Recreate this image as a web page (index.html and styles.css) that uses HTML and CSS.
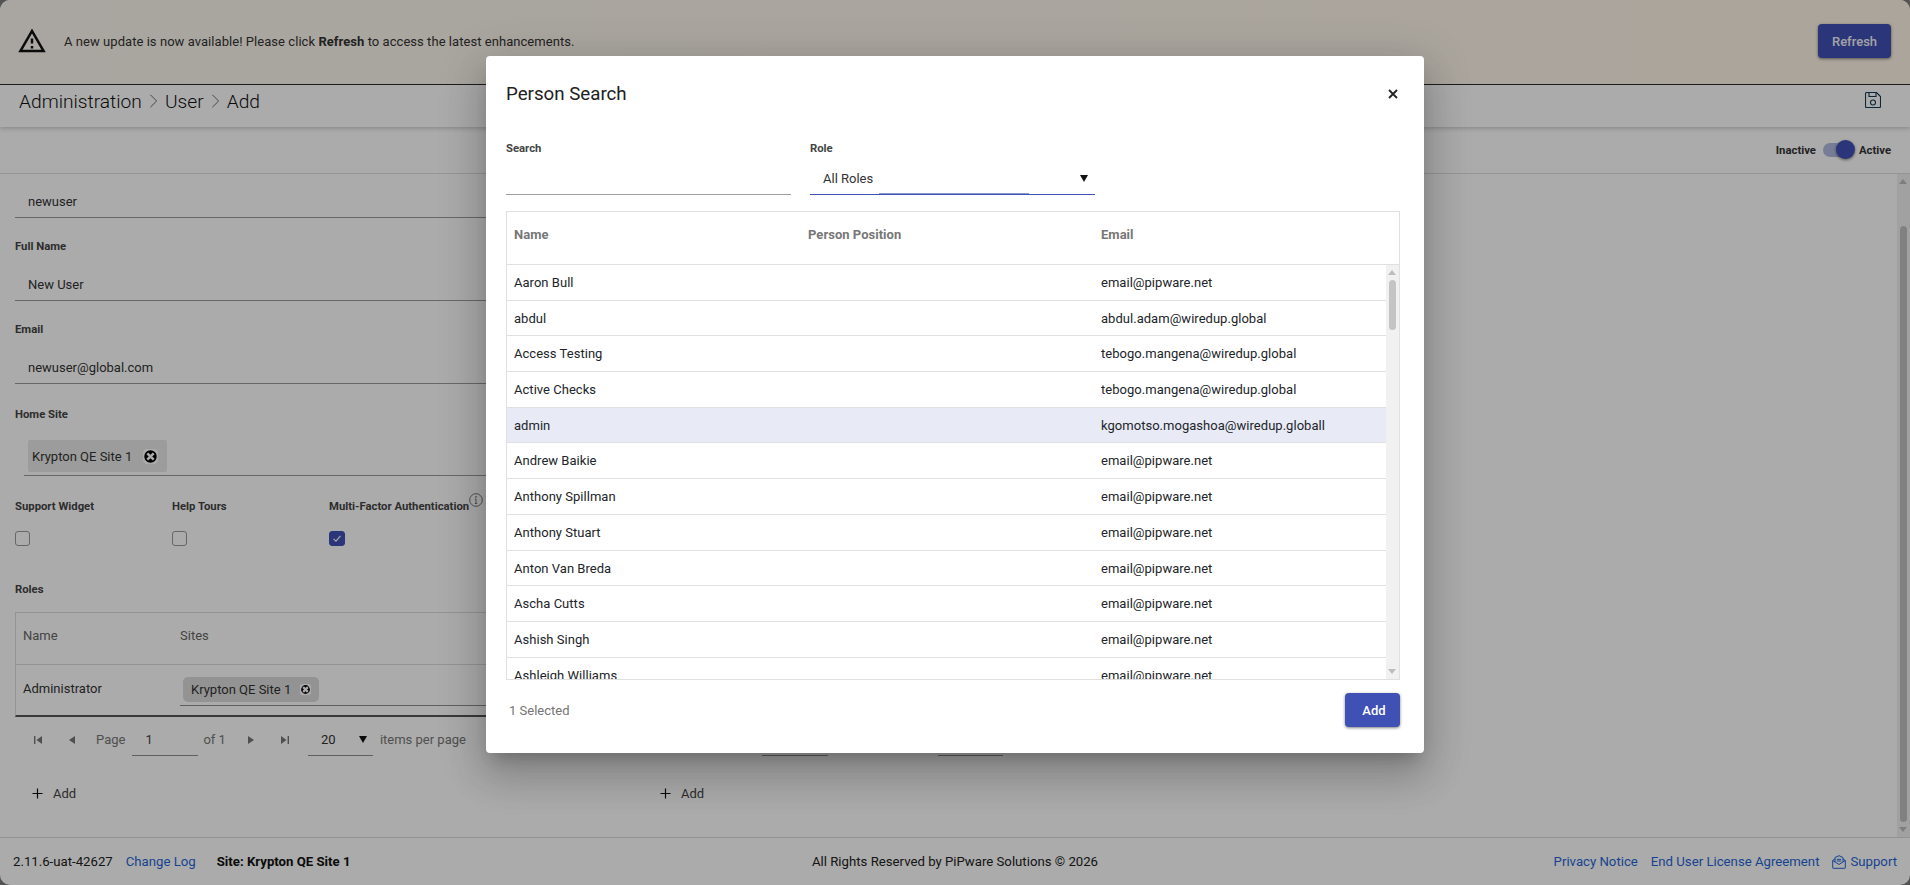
FILE: index.html
```html
<!DOCTYPE html>
<html lang="en">
<head>
<meta charset="utf-8">
<title>Administration - User - Add</title>
<link rel="stylesheet" href="styles.css">
</head>
<body>
<div class="app">
  <header class="banner">
    <svg class="warn-icon" viewBox="0 0 24 24"><path d="M12 5.99L19.53 19H4.47L12 5.99M12 2L1 21h22L12 2zm1 14h-2v2h2v-2zm0-6h-2v4h2v-4z"/></svg>
    <p class="banner-text">A new update is now available! Please click <b>Refresh</b> to access the latest enhancements.</p>
    <button class="btn btn-refresh">Refresh</button>
  </header>

  <div class="crumbs">
    <span>Administration</span>
    <svg class="chev" viewBox="0 0 10 18"><path d="M1.5 2l7 7-7 7"/></svg>
    <span>User</span>
    <svg class="chev" viewBox="0 0 10 18"><path d="M1.5 2l7 7-7 7"/></svg>
    <span>Add</span>
    <svg class="save-icon" viewBox="0 0 16 16"><path d="M1.5.5h10l4 4v10a1 1 0 0 1-1 1h-13a1 1 0 0 1-1-1v-13a1 1 0 0 1 1-1z"/><path d="M4 .5v4h7v-4"/><circle cx="8" cy="10.5" r="2.5"/></svg>
  </div>

  <div class="toolbar">
    <span class="tog-label">Inactive</span>
    <span class="toggle"><span class="knob"></span></span>
    <span class="tog-label">Active</span>
  </div>

  <main class="main">
    <div class="content">
      <div class="col-top">
        <div class="input first">newuser</div>
        <label class="label">Full Name</label>
        <div class="input">New User</div>
        <label class="label">Email</label>
        <div class="input">newuser@global.com</div>
        <label class="label label-home">Home Site</label>
        <div class="chip-box">
          <span class="chip">Krypton QE Site 1
            <svg class="x-icon" viewBox="0 0 14 14"><circle cx="7" cy="7" r="7"/><path d="M4 4l6 6M10 4l-6 6"/></svg>
          </span>
        </div>
        <div class="checks">
          <div class="check-col">
            <label class="label-flat">Support Widget</label>
            <span class="cb"></span>
          </div>
          <div class="check-col">
            <label class="label-flat">Help Tours</label>
            <span class="cb"></span>
          </div>
          <div class="check-col">
            <label class="label-flat">Multi-Factor Authentication
              <svg class="info-icon" viewBox="0 0 14 14"><circle cx="7" cy="7" r="6.3"/><path d="M7 6v4.5M5.8 10.5h2.400M5.900 6h1.100"/><circle class="dot" cx="7" cy="3.800" r=".9"/></svg>
            </label>
            <span class="cb cb-on"><svg viewBox="0 0 15 15"><path d="M3.500 8l2.800 2.600 5.200-6"/></svg></span>
          </div>
        </div>
      </div>

      <div class="cols">
        <section class="col">
          <label class="label-flat roles-label">Roles</label>
          <div class="roles">
            <div class="roles-head"><span class="rc1">Name</span><span>Sites</span></div>
            <div class="roles-row">
              <span class="rc1 role-name">Administrator</span>
              <div class="role-sites">
                <span class="chip chip-sm">Krypton QE Site 1
                  <svg class="x-icon x-sm" viewBox="0 0 14 14"><circle cx="7" cy="7" r="7"/><path d="M4 4l6 6M10 4l-6 6"/></svg>
                </span>
              </div>
            </div>
          </div>
          <div class="pager">
            <svg class="pg pg-first" viewBox="0 0 10 10"><path d="M1 1h1.400v8H1zM9 1v8L3.500 5z"/></svg>
            <svg class="pg pg-prev" viewBox="0 0 10 10"><path d="M8 1v8L2 5z"/></svg>
            <span class="pg-page">Page</span>
            <span class="pg-input">1</span>
            <span class="pg-of">of 1</span>
            <svg class="pg pg-next" viewBox="0 0 10 10"><path d="M2 1v8l6-4z"/></svg>
            <svg class="pg pg-last" viewBox="0 0 10 10"><path d="M1 1v8l5.500-4zM7.600 1H9v8H7.600z"/></svg>
            <span class="pg-select">20<i class="tri"></i></span>
            <span class="pg-items">items per page</span>
          </div>
          <button class="add-link"><svg viewBox="0 0 12 12"><path d="M6 .5v11M.5 6h11"/></svg>Add</button>
        </section>
        <section class="col col-end">
          <div class="pager">
            <svg class="pg pg-first" viewBox="0 0 10 10"><path d="M1 1h1.400v8H1zM9 1v8L3.500 5z"/></svg>
            <svg class="pg pg-prev" viewBox="0 0 10 10"><path d="M8 1v8L2 5z"/></svg>
            <span class="pg-page">Page</span>
            <span class="pg-input">1</span>
            <span class="pg-of">of 1</span>
            <svg class="pg pg-next" viewBox="0 0 10 10"><path d="M2 1v8l6-4z"/></svg>
            <svg class="pg pg-last" viewBox="0 0 10 10"><path d="M1 1v8l5.500-4zM7.600 1H9v8H7.600z"/></svg>
            <span class="pg-select">20<i class="tri"></i></span>
            <span class="pg-items">items per page</span>
          </div>
          <button class="add-link"><svg viewBox="0 0 12 12"><path d="M6 .5v11M.5 6h11"/></svg>Add</button>
        </section>
      </div>
    </div>
    <div class="vscroll"><i class="arr-up"></i><i class="thumb"></i><i class="arr-down"></i></div>
  </main>

  <footer class="footer">
    <div class="foot-left">
      <span>2.11.6-uat-42627</span>
      <a class="link">Change Log</a>
      <b class="foot-site">Site: Krypton QE Site 1</b>
    </div>
    <div class="foot-center">All Rights Reserved by PiPware Solutions © 2026</div>
    <div class="foot-right">
      <a class="link">Privacy Notice</a>
      <a class="link">End User License Agreement</a>
      <a class="link support"><svg class="sup-icon" viewBox="0 0 14 14"><path d="M.7 5.500L7 9.500l6.300-4v7.300a.5.5 0 0 1-.5.5H1.200a.5.5 0 0 1-.5-.5zM.7 5.500L3 3.800M13.300 5.500L11 3.800M3 7V2.500L7 .7l4 1.800V7M4.800 4.300h4.400M4.800 6h4.400"/></svg>Support</a>
    </div>
  </footer>
</div>

<div class="overlay"></div>

<div class="modal" role="dialog">
  <div class="modal-head">
    <h2 class="modal-title">Person Search</h2>
    <svg class="close" viewBox="0 0 10 10"><path d="M1 1l8 8M9 1l-8 8"/></svg>
  </div>
  <div class="filters">
    <div class="filter">
      <label class="label-m">Search</label>
      <div class="m-input"></div>
    </div>
    <div class="filter">
      <label class="label-m">Role</label>
      <div class="m-input m-select"><span>All Roles</span><i class="tri tri-m"></i><i class="seg"></i></div>
    </div>
  </div>
  <div class="ptable">
    <div class="p-head"><span>Name</span><span>Person Position</span><span>Email</span></div>
    <div class="p-wrap">
      <div class="p-body">
        <div class="p-row"><span>Aaron Bull</span><span></span><span>email@pipware.net</span></div>
        <div class="p-row"><span>abdul</span><span></span><span>abdul.adam@wiredup.global</span></div>
        <div class="p-row"><span>Access Testing</span><span></span><span>tebogo.mangena@wiredup.global</span></div>
        <div class="p-row"><span>Active Checks</span><span></span><span>tebogo.mangena@wiredup.global</span></div>
        <div class="p-row p-sel"><span>admin</span><span></span><span>kgomotso.mogashoa@wiredup.globall</span></div>
        <div class="p-row"><span>Andrew Baikie</span><span></span><span>email@pipware.net</span></div>
        <div class="p-row"><span>Anthony Spillman</span><span></span><span>email@pipware.net</span></div>
        <div class="p-row"><span>Anthony Stuart</span><span></span><span>email@pipware.net</span></div>
        <div class="p-row"><span>Anton Van Breda</span><span></span><span>email@pipware.net</span></div>
        <div class="p-row"><span>Ascha Cutts</span><span></span><span>email@pipware.net</span></div>
        <div class="p-row"><span>Ashish Singh</span><span></span><span>email@pipware.net</span></div>
        <div class="p-row"><span>Ashleigh Williams</span><span></span><span>email@pipware.net</span></div>
      </div>
      <div class="p-scroll"><i class="arr-up"></i><i class="thumb"></i><i class="arr-down"></i></div>
    </div>
  </div>
  <div class="modal-foot">
    <span class="selected">1 Selected</span>
    <button class="btn btn-add">Add</button>
  </div>
</div>
</body>
</html>
```

FILE: styles.css
```css
* { box-sizing: border-box; }
html, body { margin: 0; height: 100%; overflow: hidden; }
body {
  background: #7c7c7c;
  font-family: Roboto, "Liberation Sans", sans-serif;
  font-size: 13px;
  color: #212529;
}
.app {
  width: 1910px;
  height: 885px;
  display: flex;
  flex-direction: column;
  background: #fff;
  border-radius: 10px;
  overflow: hidden;
}
.banner {
  height: 85px;
  flex: none;
  display: flex;
  align-items: center;
  padding: 0 19px;
  background: linear-gradient(90deg, #fdf8f0, #fff6e8);
  border-bottom: 1px solid #2b2b2b;
}
.warn-icon { width: 30px; height: 30px; fill: #111; margin: 0 0 2px -2px; }
.banner-text { margin: 0 0 2px 17px; font-size: 13px; letter-spacing: .05px; flex: 1; color: #333; }
.btn {
  border: 0;
  border-radius: 4px;
  background: #3f51b5;
  color: #fff;
  font: 500 13px Roboto, sans-serif;
  box-shadow: 0 1px 3px rgba(0, 0, 0, .5);
}
.btn-refresh { width: 73px; height: 34px; margin: 0 0 2px; color: rgba(255, 255, 255, .95); }
.crumbs {
  height: 42px;
  flex: none;
  display: flex;
  align-items: center;
  padding: 0 29px 10px 19px;
  gap: 7px;
  font-size: 19.2px;
  font-weight: 300;
  color: #111;
  box-shadow: 0 2px 4px rgba(0, 0, 0, .18);
  position: relative;
}
.chev { width: 9px; height: 16px; fill: none; stroke: #666; stroke-width: 1.100; }
.save-icon { width: 16px; height: 16px; margin-left: auto; margin-top: -2px; fill: none; stroke: #0f3a55; stroke-width: 1.100; }
.toolbar {
  height: 47px;
  flex: none;
  display: flex;
  align-items: center;
  justify-content: flex-end;
  padding: 0 19px 0 0;
  border-bottom: 1px solid #dedede;
}
.tog-label { font-size: 11.3px; font-weight: 700; color: #333; }
.toggle {
  width: 25px;
  height: 14px;
  margin: 0 11px 0 7px;
  border-radius: 7px;
  background: #b2b9e1;
  position: relative;
}
.knob {
  position: absolute;
  right: -7px;
  top: -3px;
  width: 19px;
  height: 19px;
  border-radius: 50%;
  background: #3f51b5;
  box-shadow: 0 1px 3px rgba(0, 0, 0, .5);
}
.main { flex: 1; min-height: 0; display: flex; }
.content { flex: 1; padding-left: 15px; }
.col-top { width: 615px; }
.input {
  height: 33px;
  margin-top: 14px;
  padding-left: 13px;
  line-height: 34px;
  font-size: 13px;
  color: #333;
  border-bottom: 1px solid #9c9c9c;
}
.input.first { margin-top: 11px; }
.label, .label-flat {
  display: block;
  margin-top: 22px;
  height: 14px;
  line-height: 14px;
  font-size: 11.3px;
  font-weight: 700;
  color: #444;
}
.label-home { margin-top: 24px; }
.chip-box {
  margin-left: 9px;
  height: 54px;
  padding: 18px 0 0 4px;
  border-bottom: 1px solid #9c9c9c;
}
.chip {
  display: inline-flex;
  align-items: center;
  width: 139px;
  height: 32px;
  padding-left: 4px;
  background: #e9e9e9;
  border-radius: 2px;
  font-size: 13px;
  color: #333;
}
.x-icon { width: 15px; height: 15px; margin-left: 11px; fill: #000; stroke: #fff; stroke-width: 2.400; }
.checks { display: flex; margin-top: 24px; }
.check-col { width: 157px; }
.check-col .label-flat { margin-top: 0; white-space: nowrap; position: relative; }
.info-icon {
  position: absolute;
  left: 140px;
  top: -7px;
  width: 14px;
  height: 14px;
  fill: none;
  stroke: #777;
  stroke-width: 1;
}
.info-icon .dot { fill: #777; stroke: none; }
.cb {
  display: block;
  width: 15px;
  height: 15px;
  margin-top: 17px;
  border: 1px solid #9a9a9a;
  border-radius: 3px;
}
.cb-on { width: 16px; background: #3f51b5; border-color: #3f51b5; }
.cb-on svg { display: block; width: 14px; height: 13px; fill: none; stroke: #fff; stroke-width: 1.300; }
.cols { display: grid; grid-template-columns: 615px 615px; column-gap: 15px; }
.col-end { display: flex; flex-direction: column; justify-content: flex-end; }
.roles-label { margin-top: 37px; }
.roles {
  margin-top: 15px;
  height: 105px;
  border: 1px solid #dcdcdc;
  border-bottom: 2px solid #555;
}
.roles-head {
  height: 52px;
  display: flex;
  align-items: center;
  padding-bottom: 7px;
  border-bottom: 1px solid #dcdcdc;
  font-size: 13px;
  color: #666;
}
.rc1 { width: 164px; padding-left: 7px; flex: none; }
.roles-row { display: flex; height: 49px; }
.role-name { line-height: 48px; font-size: 13px; color: #333; }
.role-sites { flex: 1; height: 41px; padding: 12px 0 0 3px; border-bottom: 1px solid #8f8f8f; }
.chip-sm {
  width: 136px;
  height: 25px;
  padding-left: 8px;
  background: #dcdcdc;
  border-radius: 5px;
  font-size: 13px;
}
.x-sm { width: 11px; height: 11px; margin-left: 9px; stroke-width: 2.800; }
.pager {
  display: flex;
  align-items: center;
  height: 33px;
  margin-top: 6px;
  font-size: 13px;
  color: #777;
  position: relative;
}
.pg { width: 10px; height: 10px; fill: #777; flex: none; }
.pg-first { margin-left: 18px; }
.pg-prev { margin-left: 24px; }
.pg-page { margin-left: 19px; }
.pg-input {
  width: 66px;
  height: 33px;
  margin-left: 7px;
  padding-left: 13px;
  line-height: 33px;
  color: #444;
  border-bottom: 1px solid #8f8f8f;
}
.pg-of { margin-left: 5px; }
.pg-next { margin-left: 20px; }
.pg-last { margin-left: 24px; }
.pg-select {
  width: 65px;
  height: 33px;
  margin-left: 18px;
  padding-left: 13px;
  line-height: 33px;
  color: #333;
  border-bottom: 1px solid #8f8f8f;
  position: relative;
}
.tri {
  position: absolute;
  right: 6px;
  top: 13px;
  border-left: 4px solid transparent;
  border-right: 4px solid transparent;
  border-top: 7px solid #111;
}
.pg-items { margin-left: 7px; }
.add-link {
  display: flex;
  align-items: center;
  height: 30px;
  margin-top: 22px;
  padding: 0 0 0 17px;
  border: 0;
  background: none;
  font: 13px Roboto, sans-serif;
  color: #444;
}
.add-link svg { width: 11px; height: 11px; margin-right: 10px; fill: none; stroke: #111; stroke-width: 1.300; }
.col-end .add-link { padding-left: 15px; }
.vscroll {
  width: 13px;
  flex: none;
  background: #f1f1f1;
  position: relative;
}
.vscroll .arr-up, .p-scroll .arr-up {
  position: absolute; left: 2px; top: 5px;
  border-left: 4.500px solid transparent;
  border-right: 4.500px solid transparent;
  border-bottom: 5px solid #bdbdbd;
}
.vscroll .arr-down, .p-scroll .arr-down {
  position: absolute; left: 2px; bottom: 5px;
  border-left: 4.500px solid transparent;
  border-right: 4.500px solid transparent;
  border-top: 5px solid #bdbdbd;
}
.vscroll .thumb { position: absolute; left: 3px; top: 52px; width: 7px; height: 596px; border-radius: 4px; background: #c0c0c0; }
.footer {
  height: 48px;
  flex: none;
  display: grid;
  grid-template-columns: 1fr auto 1fr;
  align-items: center;
  padding: 0 13px;
  border-top: 1px solid #dcdcdc;
  font-size: 13.2px;
  color: #222;
}
.foot-left { display: flex; }
.foot-left .link { margin-left: 13px; }
.foot-site { margin-left: 21px; font-weight: 700; color: #111; }
.foot-right { display: flex; justify-content: flex-end; }
.foot-right .link { margin-left: 13px; }
.link { color: #1f66d8; }
.support { display: flex; align-items: center; }
.sup-icon { width: 14px; height: 14px; margin-right: 4px; fill: none; stroke: #1f66d8; stroke-width: 1; }
.overlay {
  position: absolute;
  inset: 0;
  background: rgba(0, 0, 0, .33);
}
.modal {
  position: absolute;
  left: 486px;
  top: 56px;
  width: 938px;
  height: 697px;
  padding: 0 24px 0 20px;
  background: #fff;
  border-radius: 4px;
  box-shadow: 0 11px 15px -7px rgba(0, 0, 0, .2), 0 24px 38px 3px rgba(0, 0, 0, .14), 0 9px 46px 8px rgba(0, 0, 0, .12);
}
.modal-head {
  height: 76px;
  display: flex;
  align-items: center;
  justify-content: space-between;
}
.modal-title { margin: 0; font-size: 18.72px; font-weight: 400; color: #212121; }
.close { width: 10px; height: 10px; margin-right: 2px; fill: none; stroke: #222; stroke-width: 1.800; }
.filters { display: flex; gap: 19px; padding-top: 10px; }
.filter { width: 285px; }
.label-m {
  display: block;
  height: 14px;
  line-height: 14px;
  font-size: 11.3px;
  font-weight: 700;
  color: #444;
}
.m-input {
  height: 34px;
  margin-top: 5px;
  line-height: 35px;
  font-size: 13px;
  border-bottom: 1px solid #9e9e9e;
  position: relative;
}
.m-select { padding-left: 13px; border-bottom-color: #3f51b5; color: #333; }
.tri-m { top: 14px; right: 7px; }
.seg { position: absolute; left: 69px; right: 66px; bottom: 0; height: 1px; background: #8c97d3; }
.ptable { margin-top: 16px; border: 1px solid #e0e0e0; height: 469px; }
.p-head, .p-row { display: grid; grid-template-columns: 294px 293px 1fr; padding-left: 7px; letter-spacing: .03px; }
.p-head {
  height: 53px;
  padding-top: 15px;
  line-height: 16px;
  font-size: 13px;
  font-weight: 700;
  color: #777;
  border-bottom: 1px solid #e0e0e0;
}
.p-wrap { display: flex; height: 414px; overflow: hidden; }
.p-body { flex: 1; }
.p-row {
  height: 35.700px;
  line-height: 36px;
  font-size: 13px;
  color: #212529;
  border-bottom: 1px solid #e0e0e0;
}
.p-sel { background: #e8eaf6; }
.p-scroll { width: 13px; flex: none; background: #f1f1f1; position: relative; }
.p-scroll .thumb { position: absolute; left: 3px; top: 15px; width: 7px; height: 50px; border-radius: 4px; background: #c4c4c4; }
.modal-foot {
  display: flex;
  justify-content: space-between;
  align-items: center;
  padding: 13px 0 0 3px;
}
.selected { font-size: 13px; color: #757575; }
.btn-add { width: 55px; height: 34px; padding-left: 9px; }
```
